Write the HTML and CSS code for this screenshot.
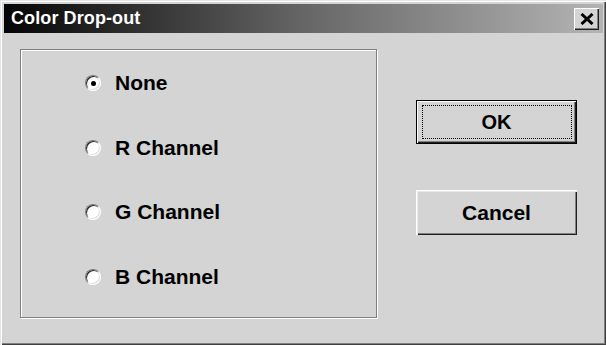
FILE: index.html
```html
<!DOCTYPE html>
<html>
<head>
<meta charset="utf-8">
<link rel="stylesheet" href="styles.css">
</head>
<body>
<div class="window">
  <div class="titlebar">
    <span class="title">Color Drop-out</span>
    <button class="close" aria-label="Close">
      <svg width="14" height="12" viewBox="0 0 14 12"><path d="M1.5 1 L12.5 11 M12.5 1 L1.5 11" stroke="#000" stroke-width="3" fill="none"/></svg>
    </button>
  </div>
  <div class="content">
    <div class="group">
      <div class="row"><span class="radio checked"><span class="dot"></span></span><span class="label">None</span></div>
      <div class="row"><span class="radio"></span><span class="label">R Channel</span></div>
      <div class="row"><span class="radio"></span><span class="label">G Channel</span></div>
      <div class="row"><span class="radio"></span><span class="label">B Channel</span></div>
    </div>
    <div class="buttons">
      <button class="btn default"><span class="focus">OK</span></button>
      <button class="btn cancel">Cancel</button>
    </div>
  </div>
</div>
</body>
</html>
```
FILE: styles.css
```css
html, body {
  margin: 0;
  padding: 0;
  background: #d4d4d4;
}
.window {
  width: 606px;
  height: 345px;
  box-sizing: border-box;
  background: #d4d4d4;
  font-family: "Liberation Sans", Arial, sans-serif;
  font-weight: bold;
  color: #000;
  overflow: hidden;
  box-shadow: inset 1px 1px 0 #e6e6e6, inset 2px 2px 0 #ffffff, inset -1px -1px 0 #404040, inset -2px -2px 0 #808080;
}
.titlebar {
  margin: 4px 3px 0 4px;
  height: 29px;
  background: linear-gradient(to right, #050505 0%, #666666 50%, #b4b4b4 100%);
  display: flex;
  align-items: center;
  padding-left: 7px;
  padding-right: 4px;
}
.title {
  color: #fff;
  font-size: 18px;
  flex: 1;
  letter-spacing: 0.1px;
}
.close {
  width: 25px;
  height: 22px;
  padding: 0;
  margin: 0;
  border: none;
  background: #d4d4d4;
  display: flex;
  align-items: center;
  justify-content: center;
  box-shadow: inset 1px 1px 0 #ffffff, inset -1px -1px 0 #202020, inset -2px -2px 0 #808080;
}
.content {
  display: flex;
  align-items: flex-start;
  padding: 16px 0 0 20px;
}
.group {
  width: 357px;
  height: 269px;
  box-sizing: border-box;
  border: 1px solid #808080;
  box-shadow: inset 1px 1px 0 #ffffff, 1px 1px 0 #ffffff;
  padding: 1px 0 0 64px;
  display: flex;
  flex-direction: column;
}
.row {
  height: 64.5px;
  display: flex;
  align-items: center;
}
.radio {
  width: 16px;
  height: 16px;
  box-sizing: border-box;
  border-radius: 50%;
  border: 1px solid;
  border-color: #7a7a7a #ffffff #ffffff #7a7a7a;
  background: #fff;
  display: flex;
  align-items: center;
  justify-content: center;
  box-shadow: inset 1px 1px 0 #202020, inset -1px -1px 0 #dcdcdc;
}
.dot {
  width: 5px;
  height: 5px;
  border-radius: 50%;
  background: #000;
}
.label {
  font-size: 21px;
  margin-left: 14px;
}
.buttons {
  margin-left: 39px;
  margin-top: 51px;
  display: flex;
  flex-direction: column;
  gap: 46px;
}
.btn {
  width: 161px;
  height: 44px;
  margin: 0;
  padding: 0;
  border: none;
  background: #d4d4d4;
  font-family: "Liberation Sans", Arial, sans-serif;
  font-weight: bold;
  font-size: 20px;
  color: #000;
  display: flex;
  align-items: center;
  justify-content: center;
}
.default {
  border: 1px solid #000;
  box-shadow: inset 1px 1px 0 #ffffff, inset -1px -1px 0 #202020, inset -2px -2px 0 #808080;
}
.focus {
  width: 150px;
  height: 34px;
  box-sizing: border-box;
  border: 1px dotted #000;
  display: flex;
  align-items: center;
  justify-content: center;
}
.cancel {
  height: 45px;
  font-size: 21px;
  box-shadow: inset 1px 1px 0 #ffffff, inset 2px 2px 0 #e8e8e8, inset -1px -1px 0 #202020, inset -2px -2px 0 #808080;
}
```
